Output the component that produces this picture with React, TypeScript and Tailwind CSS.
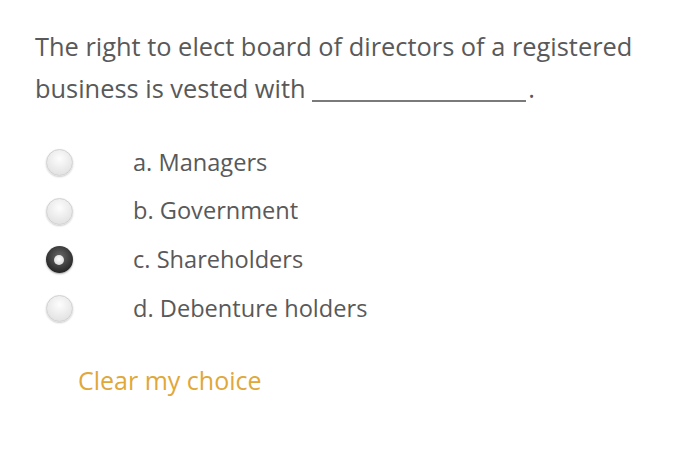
const options = [
  { label: "a. Managers", checked: false },
  { label: "b. Government", checked: false },
  { label: "c. Shareholders", checked: true },
  { label: "d. Debenture holders", checked: false },
];

function Radio({ checked }: { checked: boolean }) {
  if (checked) {
    return (
      <span className="flex h-[27px] w-[27px] items-center justify-center rounded-full bg-[radial-gradient(circle_at_50%_40%,#6a6a6a,#262626_75%)] shadow-[0_1px_2px_rgba(0,0,0,0.35)]">
        <span className="h-[10px] w-[10px] rounded-full bg-[radial-gradient(circle_at_50%_40%,#ffffff,#cfcfcf)]" />
      </span>
    );
  }
  return (
    <span className="h-[27px] w-[27px] rounded-full border border-[#d0d0d0] bg-[radial-gradient(circle_at_50%_35%,#fdfdfd,#e2e2e2_80%)] shadow-[0_1px_2px_rgba(0,0,0,0.2)]" />
  );
}

export default function App() {
  return (
    <div className="h-[465px] w-[700px] bg-white pl-[35px] pt-[25px] font-['Open_Sans',sans-serif] text-[#595959]">
      <p className="w-[640px] text-[25.4px] leading-[42px]">
        The right to elect board of directors of a registered business is vested with{" "}
        <span className="mr-[2px] inline-block w-[214px] border-b-2 border-[#7a7a7a] align-[-4px]" />.
      </p>

      <div className="mt-[29px] flex flex-col">
        {options.map((o) => (
          <label key={o.label} className="flex h-[48.7px] items-center">
            <span className="flex w-[48px] justify-center">
              <Radio checked={o.checked} />
            </span>
            <span className="ml-[50px] text-[23.6px]">{o.label}</span>
          </label>
        ))}
      </div>

      <button type="button" className="ml-[43px] mt-[29px] text-[25px] text-[#e0a73a]">
        Clear my choice
      </button>
    </div>
  );
}
